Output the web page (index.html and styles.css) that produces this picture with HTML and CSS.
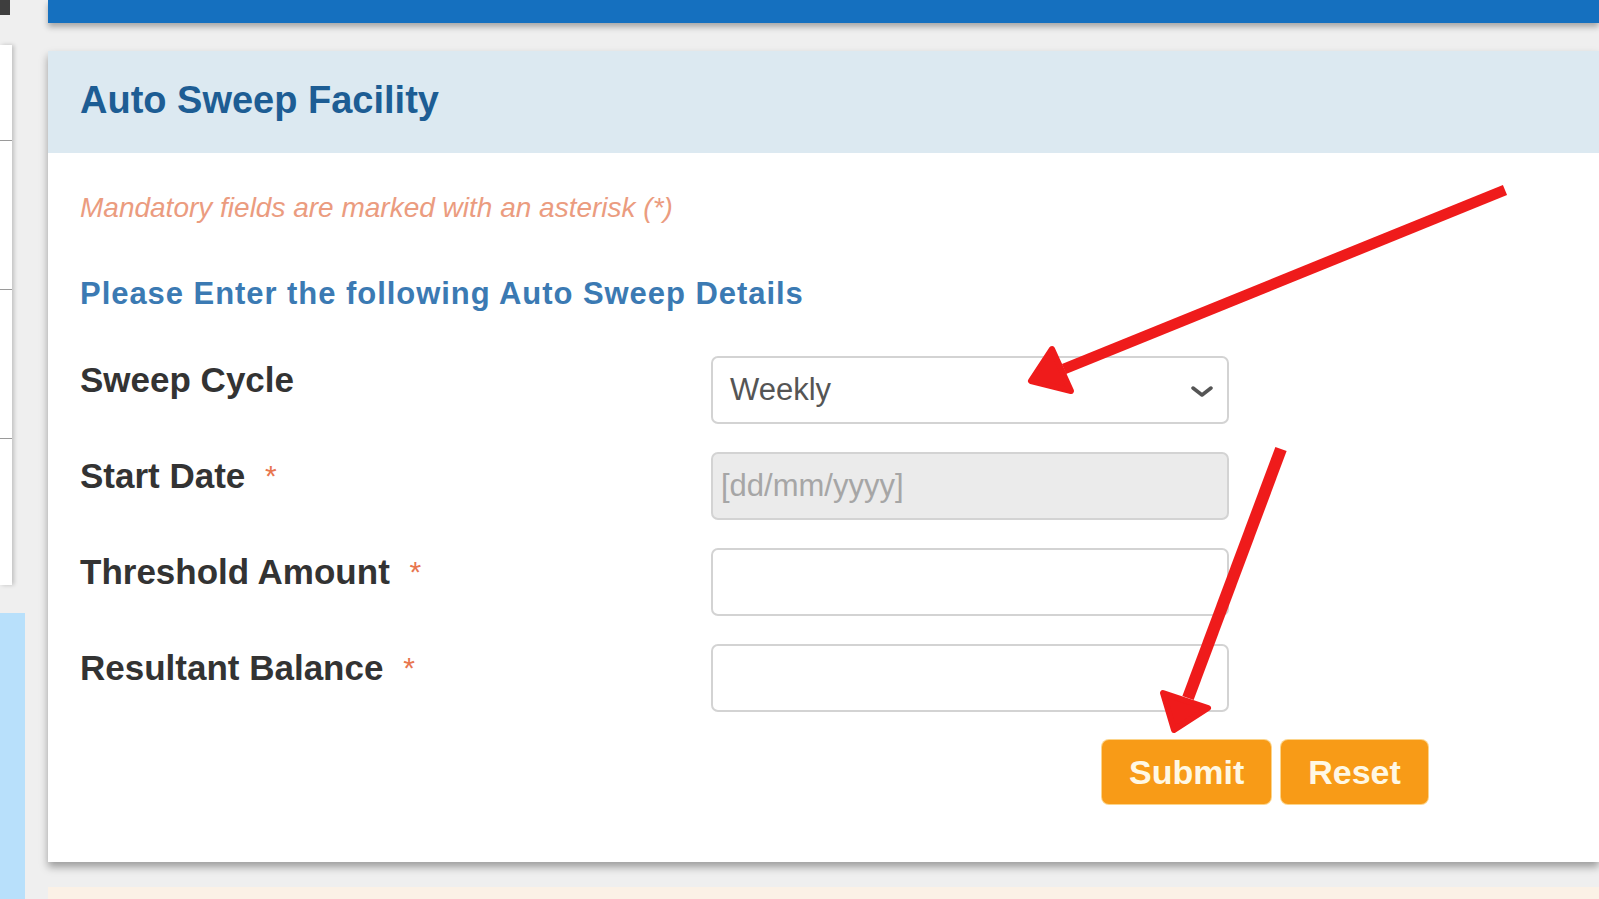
FILE: index.html
```html
<!DOCTYPE html>
<html lang="en">
<head>
    <meta charset="UTF-8">
    <meta name="viewport" content="width=device-width, initial-scale=1.0">
    <title>Auto Sweep Facility</title>
    <link rel="stylesheet" href="styles.css">
</head>
<body>
    <div class="page">
        <aside class="side">
            <div class="side-dark"></div>
            <div class="side-menu">
                <div class="side-item"></div>
                <div class="side-item tall"></div>
                <div class="side-item tall"></div>
                <div class="side-item"></div>
            </div>
            <div class="side-blue"></div>
        </aside>

        <main class="main">
            <div class="topbar"></div>

            <section class="card">
                <div class="card-head">
                    <h1>Auto Sweep Facility</h1>
                </div>
                <div class="card-body">
                    <p class="note">Mandatory fields are marked with an asterisk (*)</p>
                    <h2>Please Enter the following Auto Sweep Details</h2>

                    <form class="sweep-form">
                        <div class="row">
                            <label class="label">Sweep Cycle</label>
                            <div class="field select">
                                <span>Weekly</span>
                                <svg class="chevron" width="22" height="14" viewBox="0 0 22 14">
                                    <path d="M2 3 L11 10 L20 3" fill="none" stroke="#555" stroke-width="3.5" stroke-linecap="round" stroke-linejoin="round"/>
                                </svg>
                            </div>
                        </div>
                        <div class="row">
                            <label class="label">Start Date <span class="req">*</span></label>
                            <input class="field date" type="text" placeholder="[dd/mm/yyyy]">
                        </div>
                        <div class="row">
                            <label class="label">Threshold Amount <span class="req">*</span></label>
                            <input class="field" type="text">
                        </div>
                        <div class="row">
                            <label class="label">Resultant Balance <span class="req">*</span></label>
                            <input class="field" type="text">
                        </div>
                        <div class="actions">
                            <button type="button" class="btn">Submit</button>
                            <button type="reset" class="btn">Reset</button>
                        </div>
                    </form>
                </div>
            </section>

            <div class="footer-strip"></div>
        </main>
    </div>

    <!-- red annotation arrows drawn over the screenshot -->
    <svg class="marks" width="1599" height="899" viewBox="0 0 1599 899">
        <line x1="1505" y1="190" x2="1064" y2="369" stroke="#ef1b1b" stroke-width="11"/>
        <polygon points="1052,349 1031,381 1071,391" fill="#ef1b1b" stroke="#ef1b1b" stroke-width="6" stroke-linejoin="round"/>
        <line x1="1281" y1="449" x2="1188" y2="698" stroke="#ef1b1b" stroke-width="12"/>
        <polygon points="1163,693 1174,730 1208,708" fill="#ef1b1b" stroke="#ef1b1b" stroke-width="6" stroke-linejoin="round"/>
    </svg>
</body>
</html>
```

FILE: styles.css
```css
html, body {
    margin: 0;
    height: 100%;
    overflow: hidden;
}
body {
    font-family: "Liberation Sans", Arial, sans-serif;
    background-color: #efefef;
    position: relative;
}
.page {
    display: flex;
    gap: 23px;
    height: 899px;
}
.side {
    width: 25px;
    display: flex;
    flex-direction: column;
}
.side-dark {
    width: 10px;
    height: 15px;
    background-color: #3e3e3e;
    margin-bottom: 30px;
}
.side-menu {
    width: 12px;
    height: 540px;
    background-color: #ffffff;
    box-shadow: 2px 0 4px rgba(0,0,0,0.2);
    margin-bottom: 28px;
}
.side-item {
    height: 95px;
    border-bottom: 1px solid #9a9a9a;
}
.side-item.tall {
    height: 148px;
}
.side-item:last-child {
    border-bottom: none;
}
.side-blue {
    flex: 1;
    background-color: #b8e0fb;
}
.main {
    flex: 1;
    display: flex;
    flex-direction: column;
}
.topbar {
    height: 23px;
    background-color: #1570bf;
    box-shadow: 0 4px 6px rgba(0,0,0,0.3);
    margin-bottom: 28px;
}
.card {
    height: 811px;
    background-color: #ffffff;
    box-shadow: 0 5px 8px rgba(0,0,0,0.35);
}
.card-head {
    height: 102px;
    box-sizing: border-box;
    padding: 27px 32px 0;
    background-color: #dce9f1;
}
h1 {
    margin: 0;
    font-size: 38px;
    line-height: 44px;
    font-weight: bold;
    color: #1d5d94;
}
.card-body {
    padding: 40px 32px 0;
}
.note {
    margin: 0;
    font-size: 28px;
    line-height: 30px;
    font-style: italic;
    color: #eb9c7f;
}
h2 {
    margin: 53px 0 0;
    font-size: 31px;
    line-height: 36px;
    letter-spacing: 0.95px;
    font-weight: bold;
    color: #3b7ab3;
}
.sweep-form {
    margin-top: 44px;
}
.row {
    display: flex;
    align-items: flex-start;
    margin-bottom: 28px;
}
.label {
    width: 631px;
    padding-top: 4px;
    font-size: 35px;
    line-height: 40px;
    font-weight: bold;
    color: #333333;
}
.req {
    margin-left: 10px;
    font-size: 30px;
    font-weight: normal;
    color: #e8764f;
    vertical-align: top;
}
.field {
    width: 518px;
    height: 68px;
    box-sizing: border-box;
    border: 2px solid #d3d3d3;
    border-radius: 7px;
    background-color: #ffffff;
    font-family: "Liberation Sans", Arial, sans-serif;
    font-size: 31px;
    color: #555555;
    padding: 0 8px;
    outline: none;
}
.select {
    display: flex;
    align-items: center;
    justify-content: space-between;
    padding: 0 14px 0 17px;
}
.chevron {
    margin-top: 4px;
}
.date {
    background-color: #ebebeb;
}
.date::placeholder {
    color: #a6a6a6;
}
.actions {
    display: flex;
    gap: 10px;
    margin-left: 1022px;
}
.btn {
    height: 64px;
    padding: 0 27px;
    border: none;
    border-radius: 7px;
    background-color: #f89b17;
    box-shadow: 0 0 0 1px #fcd48a;
    color: #fff8e4;
    font-family: "Liberation Sans", Arial, sans-serif;
    font-size: 34px;
    font-weight: bold;
    cursor: pointer;
}
.footer-strip {
    flex: 1;
    margin-top: 25px;
    background-color: #fbf1e6;
}
.marks {
    position: absolute;
    top: 0;
    left: 0;
    pointer-events: none;
}
```
